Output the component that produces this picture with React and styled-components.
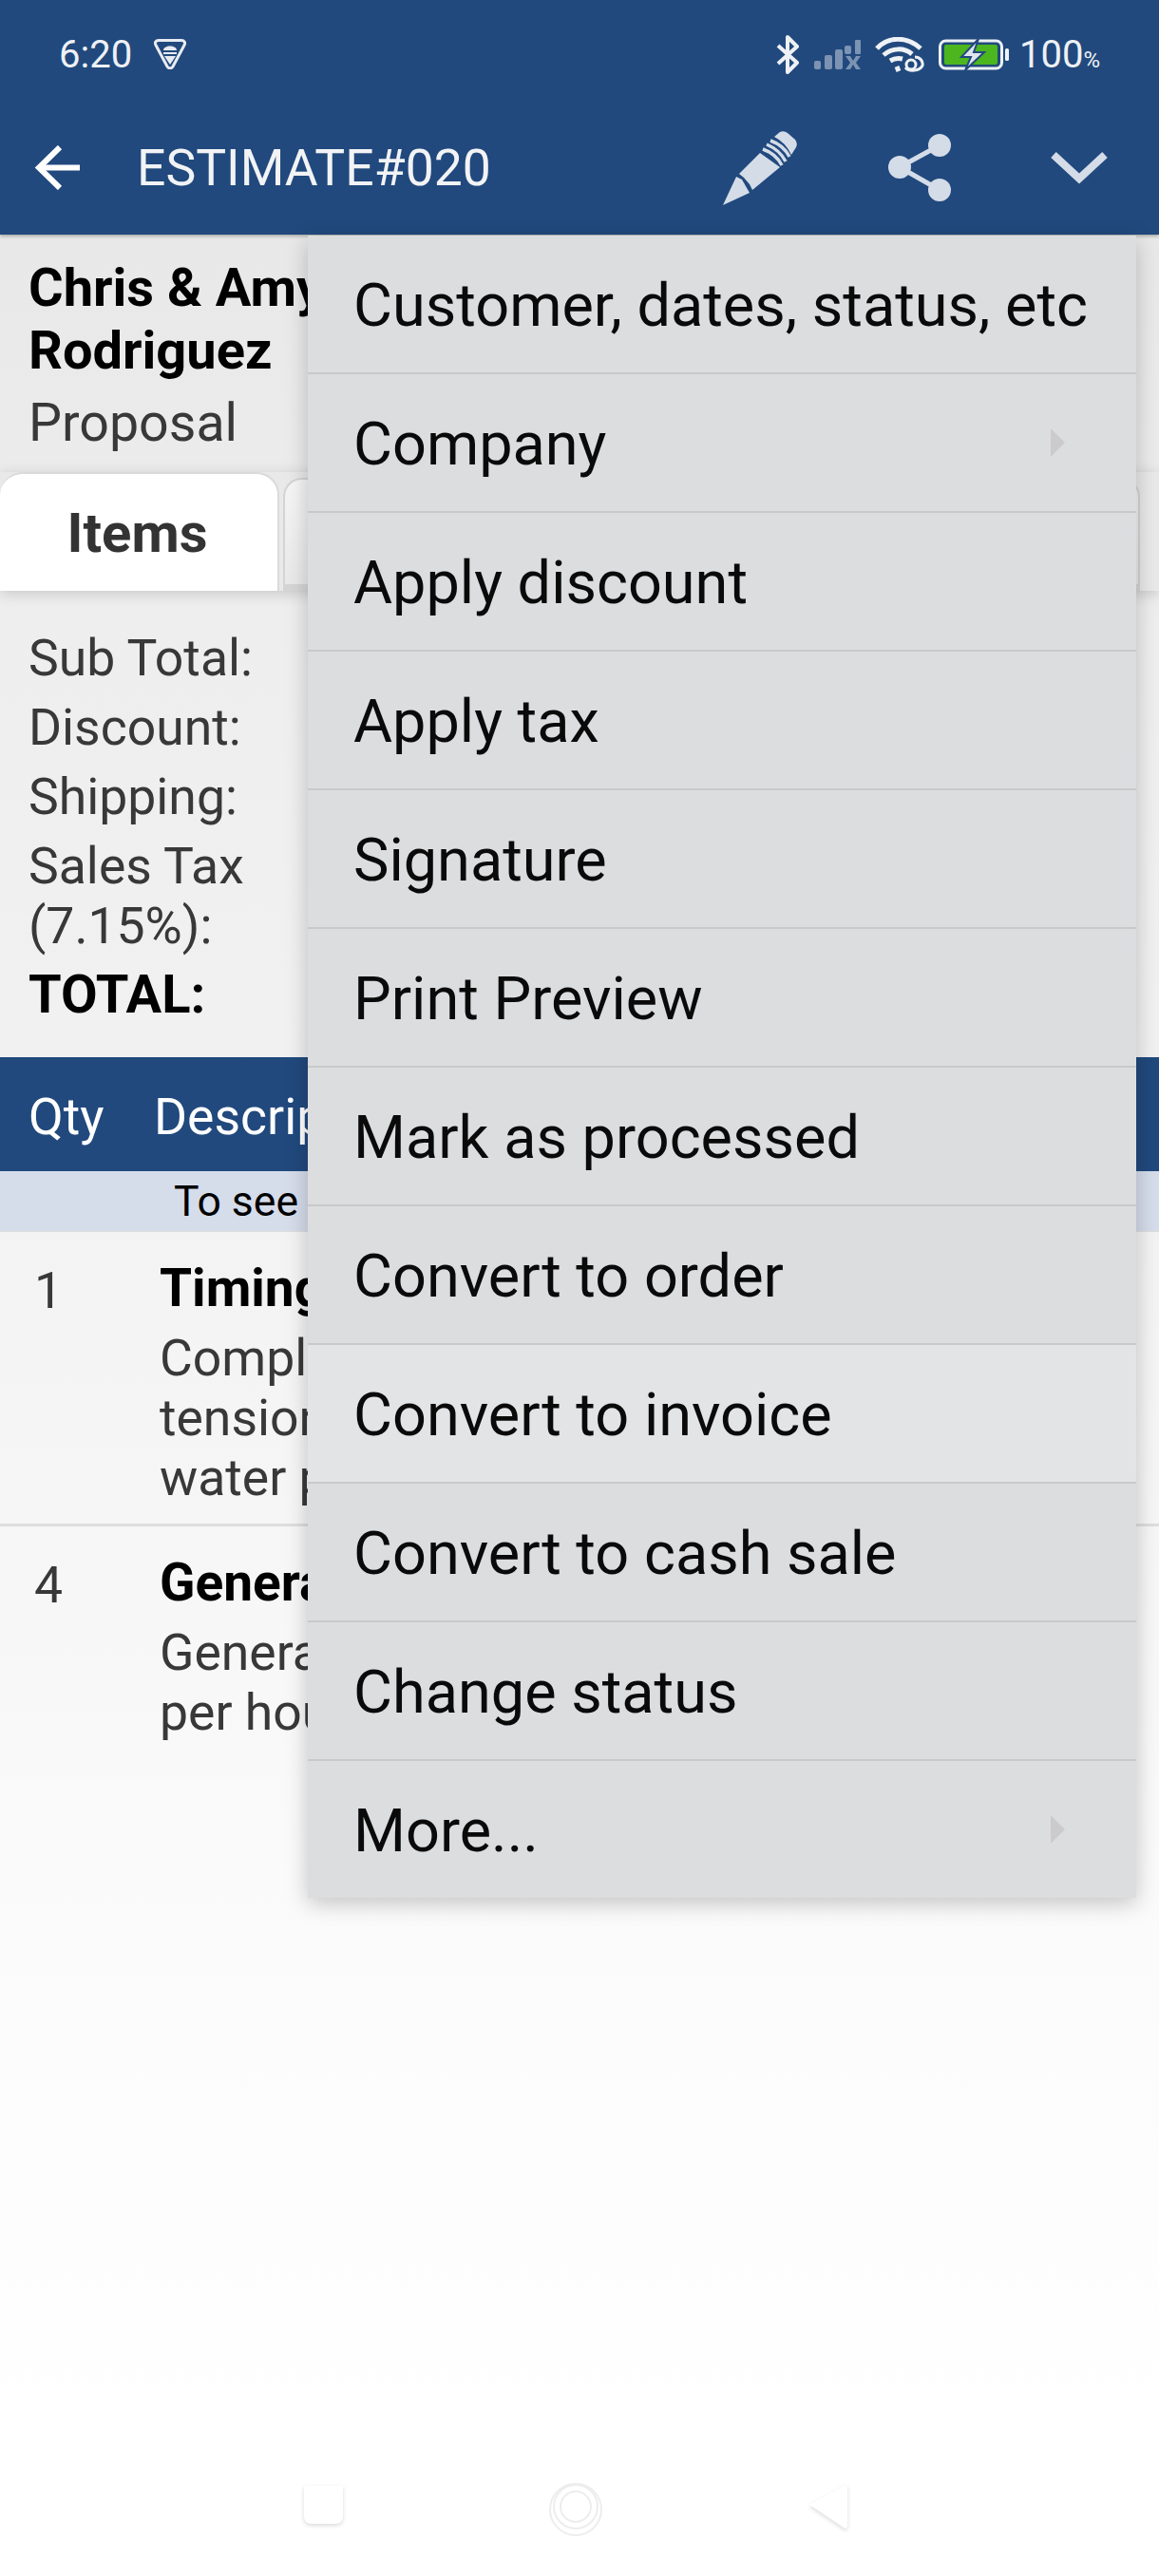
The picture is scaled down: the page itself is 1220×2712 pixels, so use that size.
import React from "react";
import styled, { createGlobalStyle } from "styled-components";

const GlobalStyle = createGlobalStyle`
  html, body {
    margin: 0;
    padding: 0;
    background: #fff;
  }
  * {
    box-sizing: border-box;
  }
`;

const Screen = styled.div`
  position: relative;
  width: 1220px;
  height: 2712px;
  overflow: hidden;
  display: flex;
  flex-direction: column;
  font-family: Roboto, "Liberation Sans", sans-serif;
  background: linear-gradient(
    180deg,
    #e8e8e8 0,
    #e8e8e8 247px,
    #eeeeee 650px,
    #f1f1f1 1100px,
    #f6f6f6 1600px,
    #fbfbfb 2040px,
    #fff 2600px
  );
`;

const Header = styled.header`
  position: relative;
  background: #21497d;
  height: 247px;
  flex: none;
  color: #eef1f5;
  box-shadow: 0 2px 3px rgba(0, 0, 0, 0.25);
`;

const StatusBar = styled.div`
  display: flex;
  align-items: center;
  height: 114px;
  padding: 0 62px;
  font-size: 40px;
`;

const StatusLeft = styled.div`
  display: flex;
  align-items: center;
  gap: 23px;
`;

const StatusRight = styled.div`
  display: flex;
  align-items: center;
  margin-left: auto;
  gap: 15px;
`;

const Percent = styled.span`
  margin-left: -5px;
  span {
    font-size: 24px;
  }
`;

const Toolbar = styled.div`
  display: flex;
  align-items: center;
  height: 125px;
  padding-left: 36px;
`;

const Title = styled.div`
  font-size: 53.5px;
  margin-left: 60px;
  color: #f2f3f5;
`;

const Actions = styled.div`
  display: flex;
  align-items: center;
  margin-left: auto;
`;

const ActionSlot = styled.div`
  display: flex;
  justify-content: center;
  width: 168px;
`;

const CustomerBlock = styled.div`
  padding: 23px 30px 0;
  height: 250px;
`;

const CustomerName = styled.div`
  font-size: 56px;
  font-weight: 700;
  line-height: 66px;
  color: #000;
  width: 440px;
`;

const CustomerStatus = styled.div`
  font-size: 55.5px;
  line-height: 66px;
  margin-top: 11px;
  color: #383838;
`;

const TabStrip = styled.div`
  position: relative;
  display: flex;
  align-items: flex-end;
  gap: 4px;
  height: 125px;
  flex: none;
  background: #e9e9e9;
  box-shadow: 0 3px 14px rgba(0, 0, 0, 0.16);
`;

const ActiveTab = styled.div`
  flex: none;
  width: 294px;
  height: 125px;
  padding-right: 3px;
  border: 2px solid #dadada;
  border-bottom: none;
  border-left: none;
  border-radius: 24px 24px 0 0;
  background: #fff;
  display: flex;
  align-items: center;
  justify-content: center;
  font-size: 58px;
  font-weight: 700;
  color: #333;
`;

const IdleTab = styled.div`
  flex: none;
  width: 902px;
  height: 119px;
  border: 2px solid #d4d4d4;
  border-bottom: 7px solid #d6d6d6;
  border-radius: 20px 20px 0 0;
  background: linear-gradient(180deg, #f6f6f6, #e9e9e9);
`;

const Totals = styled.div`
  padding: 39px 30px 0;
  height: 491px;
  flex: none;
`;

const TotalRow = styled.div`
  font-size: ${(p) => (p.$strong ? 56 : 53.5)}px;
  line-height: 63px;
  margin-bottom: 10px;
  width: 280px;
  font-weight: ${(p) => (p.$strong ? 700 : 400)};
  color: ${(p) => (p.$strong ? "#000" : "#383838")};
`;

const TableHead = styled.div`
  display: flex;
  align-items: center;
  height: 120px;
  flex: none;
  padding: 4px 0 0 30px;
  background: #21497d;
  color: #fff;
  font-size: 53.5px;
  white-space: nowrap;
`;

const QtyHead = styled.div`
  width: 132px;
`;

const DescHead = styled.div`
  width: 162px;
  overflow: hidden;
`;

const HintBand = styled.div`
  height: 64px;
  flex: none;
  padding-left: 183px;
  background: #d5dcea;
  color: #000;
  font-size: 44.5px;
  line-height: 64px;
  white-space: nowrap;
  border-bottom: 1px solid #ddd;
`;

const ItemRow = styled.div`
  display: flex;
  height: ${(p) => p.$height}px;
  flex: none;
  padding: 29px 0 0 36px;
  border-bottom: ${(p) => (p.$last ? "none" : "3px solid #dedede")};
`;

const ItemQty = styled.div`
  width: 132px;
  font-size: 53.5px;
  line-height: 66px;
  color: #383838;
`;

const ItemBody = styled.div`
  width: 156px;
  overflow: hidden;
  white-space: nowrap;
`;

const ItemName = styled.div`
  font-size: 55px;
  font-weight: 700;
  line-height: 60px;
  color: #000;
  margin-bottom: 12px;
`;

const ItemLine = styled.div`
  font-size: 53.5px;
  line-height: 63px;
  color: #383838;
`;

const NavBar = styled.div`
  margin-top: auto;
  height: 112px;
  flex: none;
  display: flex;
  align-items: flex-start;
  padding: 13px 0 0 207px;
`;

const NavSlot = styled.div`
  display: flex;
  justify-content: center;
  width: 266px;
`;

const NavShape = styled.svg`
  filter: drop-shadow(0 2px 2px rgba(0, 0, 0, 0.14));
`;

const Menu = styled.div`
  position: absolute;
  top: 248px;
  left: 324px;
  width: 872px;
  background: #dcdddf;
  box-shadow: 0 6px 22px rgba(0, 0, 0, 0.22);
`;

const MenuItem = styled.div`
  display: flex;
  align-items: center;
  height: ${(p) => (p.$last ? 144 : 146)}px;
  padding: 3px 0 0 48px;
  font-size: 63px;
  color: #0a0a0a;
  white-space: nowrap;
  border-bottom: ${(p) => (p.$last ? "none" : "2px solid #c8c9cb")};
  background: ${(p) => (p.$lit ? "#e3e4e6" : "transparent")};
`;

const SubArrow = styled.span`
  margin: -3px 75px 0 auto;
  width: 0;
  height: 0;
  border-top: 15px solid transparent;
  border-bottom: 15px solid transparent;
  border-left: 15px solid #cbcbcd;
`;

const BackIcon = () => (
  <svg width="48" height="47" viewBox="0 0 48 47" fill="none" stroke="#fff" strokeWidth="6">
    <path d="M48 23.5H6" />
    <path d="M27 2 5 23.5 27 45" />
  </svg>
);

const ShieldIcon = () => (
  <svg width="34" height="32" viewBox="0 0 34 32" fill="none">
    <path d="M5 1.500h24c3 0 4.500 2.500 3 5L20 29c-1.500 2.500-4.500 2.500-6 0L2 6.500C.5 4 2 1.500 5 1.500z" stroke="#e8ecf2" strokeWidth="3" />
    <path d="M10 12c0-6 14-6 14 0z" fill="#e8ecf2" />
    <path d="M10 14h14v2H10zM11 18h12l-6 9z" fill="#e8ecf2" />
  </svg>
);

const BluetoothIcon = () => (
  <svg width="25" height="41" viewBox="0 0 25 41" fill="none" stroke="#eef1f5" strokeWidth="4">
    <path d="M2 11 22 29 12 39V2l10 10L2 30" strokeLinejoin="round" />
  </svg>
);

const SignalIcon = () => (
  <svg width="49" height="31" viewBox="0 0 49 31" fill="#7d93b3">
    <rect x="0" y="22" width="7" height="9" rx="2" />
    <rect x="11" y="16" width="8" height="15" rx="2" />
    <rect x="22" y="10" width="8" height="21" rx="2" />
    <rect x="32" y="6" width="7" height="9" rx="2" />
    <rect x="43" y="0" width="6" height="15" rx="1" />
    <path d="M33 17h5l3 5 3-5h5l-5 7 5 7h-5l-3-5-3 5h-5l5-7z" />
  </svg>
);

const WifiIcon = () => (
  <svg width="52" height="37" viewBox="0 0 52 37" fill="none" stroke="#eef1f5" strokeWidth="5">
    <path d="M2 12C14-1 34-1 48 12" />
    <path d="M9 19c9-8 22-8 30-1" />
    <path d="M16 25c5-3 9-3 13-2" />
    <path d="M23 31l2 5" />
    <circle cx="38" cy="29" r="5" strokeWidth="3" />
    <path d="M32 32c4 5 15 4 18-2 1-5-3-9-8-9" strokeWidth="3" />
  </svg>
);

const BatteryIcon = () => (
  <svg width="75" height="33" viewBox="0 0 75 33" fill="none">
    <rect x="1.500" y="2" width="65" height="29" rx="6" stroke="#eef1f5" strokeWidth="3" />
    <rect x="6" y="6" width="56" height="21" rx="2" fill="#4cb61f" />
    <rect x="70" y="10" width="4" height="13" rx="1.500" fill="#eef1f5" />
    <path d="M42 0 24 19h10l-6 14 20-19H37z" fill="#dfe5ee" stroke="#21497d" strokeWidth="2" />
  </svg>
);

const PencilIcon = () => (
  <svg width="78" height="78" viewBox="0 0 78 78" fill="#d4dce8">
    <path d="M0 78 14 48 20 51 24 58 28 65z" />
    <path d="M17 45 39 23 60 38 31 62 28 56 22 49z" />
    <path d="M42 19Q56 24 62 36M46 14Q60 20 66 32M50 10Q64 15 70 27" fill="none" stroke="#d4dce8" strokeWidth="3.500" />
    <path d="M54 6 60 1Q64-1 68 2L76 9Q79 13 77 17L72 25Q66 12 54 6z" />
  </svg>
);

const ShareIcon = () => (
  <svg width="66" height="71" viewBox="0 0 66 71" fill="#d4dce8">
    <circle cx="54" cy="12" r="12" />
    <circle cx="12" cy="35" r="12" />
    <circle cx="54" cy="59" r="12" />
    <path d="M12 35 54 12M12 35l42 24" stroke="#d4dce8" strokeWidth="5" />
  </svg>
);

const ChevronIcon = () => (
  <svg width="60" height="34" viewBox="0 0 60 34" fill="none" stroke="#d4dce8" strokeWidth="8">
    <path d="M3 3 30 28 57 3" />
  </svg>
);

const NavSquare = () => (
  <NavShape width="43" height="47" viewBox="0 0 43 47">
    <path d="M1 4h41v32c0 5-3 8-8 8H9c-5 0-8-3-8-8z" fill="#fff" />
  </NavShape>
);

const NavCircle = () => (
  <svg width="60" height="58" viewBox="0 0 60 58" fill="none" stroke="#ededed" strokeWidth="2">
    <circle cx="30" cy="29" r="27" />
    <circle cx="30" cy="26" r="23" />
    <circle cx="30" cy="26" r="16" />
  </svg>
);

const NavTriangle = () => (
  <NavShape width="44" height="52" viewBox="0 0 44 52">
    <path d="M42 2v44c0 3-2 4-4 2L2 24z" fill="#fff" />
  </NavShape>
);

const menuItems = [
  { label: "Customer, dates, status, etc" },
  { label: "Company", sub: true },
  { label: "Apply discount" },
  { label: "Apply tax" },
  { label: "Signature" },
  { label: "Print Preview" },
  { label: "Mark as processed" },
  { label: "Convert to order" },
  { label: "Convert to invoice", lit: true },
  { label: "Convert to cash sale" },
  { label: "Change status" },
  { label: "More...", sub: true },
];

export default function App() {
  return (
    <Screen>
      <GlobalStyle />
      <Header>
        <StatusBar>
          <StatusLeft>
            <span>6:20</span>
            <ShieldIcon />
          </StatusLeft>
          <StatusRight>
            <BluetoothIcon />
            <SignalIcon />
            <WifiIcon />
            <BatteryIcon />
            <Percent>
              100<span>%</span>
            </Percent>
          </StatusRight>
        </StatusBar>
        <Toolbar>
          <BackIcon />
          <Title>ESTIMATE#020</Title>
          <Actions>
            <ActionSlot>
              <PencilIcon />
            </ActionSlot>
            <ActionSlot>
              <ShareIcon />
            </ActionSlot>
            <ActionSlot>
              <ChevronIcon />
            </ActionSlot>
          </Actions>
        </Toolbar>
      </Header>

      <CustomerBlock>
        <CustomerName>Chris &amp; Amy Rodriguez</CustomerName>
        <CustomerStatus>Proposal</CustomerStatus>
      </CustomerBlock>

      <TabStrip>
        <ActiveTab>Items</ActiveTab>
        <IdleTab />
      </TabStrip>

      <Totals>
        <TotalRow>Sub Total:</TotalRow>
        <TotalRow>Discount:</TotalRow>
        <TotalRow>Shipping:</TotalRow>
        <TotalRow>Sales Tax (7.15%):</TotalRow>
        <TotalRow $strong>TOTAL:</TotalRow>
      </Totals>

      <TableHead>
        <QtyHead>Qty</QtyHead>
        <DescHead>Description</DescHead>
      </TableHead>
      <HintBand>To see</HintBand>

      <ItemRow $height={310}>
        <ItemQty>1</ItemQty>
        <ItemBody>
          <ItemName>Timing belt</ItemName>
          <ItemLine>Complete</ItemLine>
          <ItemLine>tension</ItemLine>
          <ItemLine>water pump</ItemLine>
        </ItemBody>
      </ItemRow>
      <ItemRow $height={240} $last>
        <ItemQty>4</ItemQty>
        <ItemBody>
          <ItemName>General</ItemName>
          <ItemLine>General</ItemLine>
          <ItemLine>per hour</ItemLine>
        </ItemBody>
      </ItemRow>

      <NavBar>
        <NavSlot>
          <NavSquare />
        </NavSlot>
        <NavSlot>
          <NavCircle />
        </NavSlot>
        <NavSlot>
          <NavTriangle />
        </NavSlot>
      </NavBar>

      <Menu>
        {menuItems.map((item, i) => (
          <MenuItem key={item.label} $lit={item.lit} $last={i === menuItems.length - 1}>
            {item.label}
            {item.sub && <SubArrow />}
          </MenuItem>
        ))}
      </Menu>
    </Screen>
  );
}
